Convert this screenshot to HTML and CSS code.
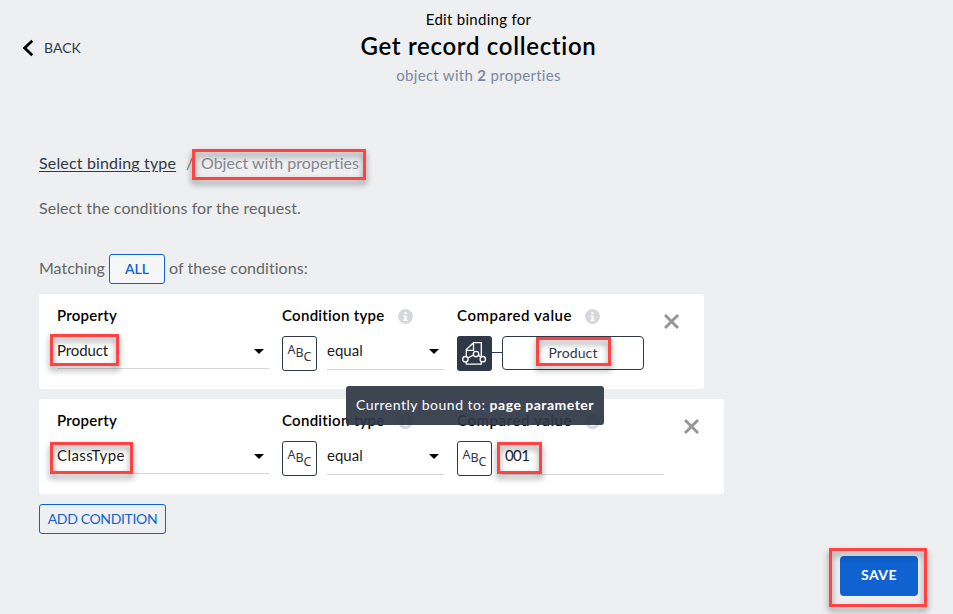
FILE: index.html
```
<!DOCTYPE html>
<html lang="en">
<head>
<meta charset="utf-8">
<title>Edit binding</title>
<link rel="stylesheet" href="styles.css">
</head>
<body>
<header class="header">
  <a class="back"><svg width="12" height="18" viewBox="0 0 12 18"><path d="M10.3 1.7 2.6 9l7.7 7.3" fill="none" stroke="#000" stroke-width="2.8"/></svg><span class="t-back">BACK</span></a>
  <div class="titles">
    <div class="eyebrow"><span>Edit binding for</span></div>
    <h1><span>Get record collection</span></h1>
    <div class="subtitle"><span>object with <b>2</b> properties</span></div>
  </div>
</header>
<main class="main">
  <nav class="crumbs"><a class="crumb-link">Select binding type</a><span class="slash">/</span><span class="crumb-current">Object with properties<i class="mark mark-crumb"></i></span></nav>
  <p class="intro"><span>Select the conditions for the request.</span></p>
  <div class="matching"><span class="t-matching">Matching</span><button class="btn btn-all"><span>ALL</span></button><span class="t-of">of these conditions:</span></div>

  <section class="card card-bound">
    <div class="col property">
      <div class="label"><span class="t-property">Property</span></div>
      <div class="select"><span class="t-product">Product</span><i class="caret"></i><i class="mark mark-product"></i></div>
    </div>
    <div class="col condition">
      <div class="label"><span class="t-condition">Condition type</span><svg class="info" width="15" height="15" viewBox="0 0 15 15"><circle cx="7.5" cy="7.5" r="7.4" fill="#d5d7dc"/><path d="M6.4 3h2.2v2H6.4zM5.6 6.2h3v4.6h1v1.3H5.4v-1.3h1V7.5h-.8z" fill="#fff"/></svg></div>
      <div class="field"><span class="abc"><span>A</span><span>B</span><span>C</span></span><div class="select"><span class="t-equal">equal</span><i class="caret"></i></div></div>
    </div>
    <div class="col compared">
      <div class="label"><span class="t-compared">Compared value</span><svg class="info" width="15" height="15" viewBox="0 0 15 15"><circle cx="7.5" cy="7.5" r="7.4" fill="#d5d7dc"/><path d="M6.4 3h2.2v2H6.4zM5.6 6.2h3v4.6h1v1.3H5.4v-1.3h1V7.5h-.8z" fill="#fff"/></svg></div>
      <div class="field bound">
        <span class="source"><svg width="35" height="35" viewBox="0 0 35 35" fill="none" stroke="#fff" stroke-width="1.3"><path d="M9.3 20v-6.5L16.5 6.7h7.8V20M9.3 14.3h7.2V6.7M9.3 26v2.2h15V26"/><path d="m11 21.8 5.6-2.8M21.5 19l2.2 2"/><g fill="#2f3847"><circle cx="8.4" cy="23.2" r="2.7"/><circle cx="19" cy="18" r="2.7"/><circle cx="25.8" cy="23.2" r="2.7"/></g></svg></span>
        <i class="link"></i><div class="value"><span class="t-value">Product</span><i class="mark mark-value"></i></div>
      </div>
    </div>
    <svg class="remove" width="16" height="16" viewBox="0.5 0.5 16 16"><path d="m1.5 1.5 13 13m0-13-13 13" stroke="#969696" stroke-width="2.9"/></svg>
    <div class="tooltip"><span>Currently bound to: <b>page parameter</b></span></div>
  </section>

  <section class="card card-text">
    <div class="col property">
      <div class="label"><span class="t-property">Property</span></div>
      <div class="select"><span class="t-class">ClassType</span><i class="caret"></i><i class="mark mark-class"></i></div>
    </div>
    <div class="col condition">
      <div class="label"><span class="t-condition">Condition type</span><svg class="info" width="15" height="15" viewBox="0 0 15 15"><circle cx="7.5" cy="7.5" r="7.4" fill="#d5d7dc"/><path d="M6.4 3h2.2v2H6.4zM5.6 6.2h3v4.6h1v1.3H5.4v-1.3h1V7.5h-.8z" fill="#fff"/></svg></div>
      <div class="field"><span class="abc"><span>A</span><span>B</span><span>C</span></span><div class="select"><span class="t-equal">equal</span><i class="caret"></i></div></div>
    </div>
    <div class="col compared">
      <div class="label"><span class="t-compared">Compared value</span><svg class="info" width="15" height="15" viewBox="0 0 15 15"><circle cx="7.5" cy="7.5" r="7.4" fill="#d5d7dc"/><path d="M6.4 3h2.2v2H6.4zM5.6 6.2h3v4.6h1v1.3H5.4v-1.3h1V7.5h-.8z" fill="#fff"/></svg></div>
      <div class="field"><span class="abc"><span>A</span><span>B</span><span>C</span></span><div class="select input"><span class="t-num">001</span><i class="mark mark-num"></i></div></div>
    </div>
    <svg class="remove" width="16" height="16" viewBox="0.5 0.5 16 16"><path d="m1.5 1.5 13 13m0-13-13 13" stroke="#969696" stroke-width="2.9"/></svg>
  </section>

  <button class="btn btn-add"><span>ADD CONDITION</span></button>
</main>
<footer class="footer"><div class="save-wrap"><button class="save"><span>SAVE</span></button><i class="mark mark-save"></i></div></footer>
</body>
</html>
```
FILE: styles.css
```
* { box-sizing: border-box; }
body { margin: 0; height: 614px; overflow: hidden; background: #edeff1; color: #000; font-family: Lato, "Liberation Sans", sans-serif; font-size: 15px; font-variant-ligatures: none; }
button { font-family: inherit; padding: 0; margin: 0; }
span { white-space: nowrap; }
svg { display: block; flex: none; }

.header { display: grid; grid-template-columns: 200px 1fr 196px; height: 149px; }
.back { display: flex; align-items: center; gap: 10px; height: 18px; margin: 39px 0 0 22px; color: #2f3847; font-size: 14px; }
.t-back { line-height: 16px; padding-bottom: 1px; }
.titles { text-align: center; padding-top: 10px; }
.eyebrow { height: 20px; line-height: 18px; letter-spacing: .28px; }
h1 { margin: 0; height: 34px; line-height: 32px; font-size: 24px; font-weight: 600; letter-spacing: .68px; }
.subtitle { height: 24px; line-height: 22px; color: #7b88a1; letter-spacing: .3px; }

.main { margin-left: 39px; }
.crumbs { display: flex; height: 31px; line-height: 28px; font-size: 16px; color: #2f3847; }
.crumb-link { width: 137px; white-space: nowrap; text-decoration: underline; text-underline-offset: 2px; letter-spacing: .16px; }
.slash { width: 25px; padding-left: 10px; color: #777; }
.crumb-current { position: relative; color: #85878d; }
.intro { margin: 14px 0 0; height: 30px; line-height: 28px; font-size: 16px; color: #666; letter-spacing: .08px; }
.matching { display: flex; align-items: center; margin-top: 30px; height: 30px; font-size: 16px; color: #666; }
.t-matching { width: 70px; height: 30px; line-height: 27px; }
.btn { display: block; height: 30px; border: 1px solid #0f62cf; border-radius: 3px; background: transparent; color: #0f62cf; font-size: 14px; }
.btn span { display: block; height: 28px; line-height: 27px; }
.btn-all { width: 56px; margin-right: 4px; background: #f4f6f8; font-weight: 600; }
.t-of { height: 30px; line-height: 27px; letter-spacing: .05px; }

.card { position: relative; display: flex; gap: 13px; height: 95px; margin-top: 10px; padding: 12px 18px 0; background: #fff; border-radius: 3px; }
.card-bound { width: 665px; z-index: 2; }
.card-text { width: 685px; }
.label { display: flex; align-items: center; gap: 13px; height: 20px; margin-bottom: 10px; font-weight: 600; }
.label span { height: 20px; line-height: 18px; }
.t-property { letter-spacing: .25px; }
.t-condition { letter-spacing: .28px; }
.t-compared { letter-spacing: .57px; }
.property { width: 212px; }
.condition { width: 162px; }
.card-bound .compared { width: 187px; }
.card-text .compared { width: 207px; }
.field { display: flex; gap: 10px; height: 35px; }
.select { position: relative; flex: 1; display: flex; justify-content: space-between; height: 34px; line-height: 28px; border-bottom: 1px solid #d3d5da; color: #1c1c1c; }
.property .select { height: 33px; }
.t-product { letter-spacing: -.1px; }
.t-class { letter-spacing: .45px; }
.t-num { letter-spacing: -.6px; }
.caret { width: 0; height: 0; margin: 13px 5px 0 0; border: 5px solid transparent; border-top-color: #000; border-bottom: 0; }
.abc { display: flex; justify-content: center; flex: none; width: 35px; height: 35px; border: 1px solid #2f3847; border-radius: 3px; color: #2f3847; font: 12.5px/14px "Noto Sans", sans-serif; }
.abc span { margin-top: 6px; }
.abc span + span { margin-top: 9px; }
.abc span + span + span { margin-top: 13px; }
.field.bound { gap: 0; }
.source { width: 35px; height: 35px; border-radius: 3px; background: #2f3847; }
.link { width: 10px; height: 1px; margin-top: 16px; background: #2f3847; }
.value { position: relative; flex: 1; height: 34px; line-height: 31px; border: 1px solid #2f3847; border-radius: 4px; text-align: center; font-size: 14px; color: #2f3847; }
.t-value { letter-spacing: .1px; }
.input { padding-left: 3px; }
.remove { margin: 8px 0 0 7px; }
.tooltip { position: absolute; left: 307px; top: 92px; width: 258px; height: 39px; line-height: 38px; border-radius: 3px; background: rgba(47, 56, 71, .93); color: #fff; text-align: center; font-size: 14px; letter-spacing: .5px; }

.btn-add { width: 127px; margin-top: 10px; letter-spacing: -.35px; }
.footer { display: flex; justify-content: flex-end; padding: 22px 35px 0 0; }
.save-wrap { position: relative; }
.save { display: block; width: 78px; height: 40px; border: 0; border-radius: 4px; background: #0f62cf; color: #fff; font-size: 14px; font-weight: 700; letter-spacing: .4px; }
.save span { display: block; height: 40px; line-height: 38px; }

.mark { position: absolute; border: 3px solid #ff4242; filter: drop-shadow(0 4px 3px rgba(0, 0, 0, .45)); }
.mark-crumb { left: -9px; top: 0; width: 174px; height: 31px; }
.mark-product { left: -7px; top: -2px; width: 69px; height: 32px; }
.mark-class { left: -7px; top: 1px; width: 83px; height: 32px; }
.mark-value { left: 33px; top: 0; width: 75px; height: 29px; }
.mark-num { left: -5px; top: 1px; width: 45px; height: 32px; }
.mark-save { left: -11px; top: -8px; width: 98px; height: 59px; }
```
